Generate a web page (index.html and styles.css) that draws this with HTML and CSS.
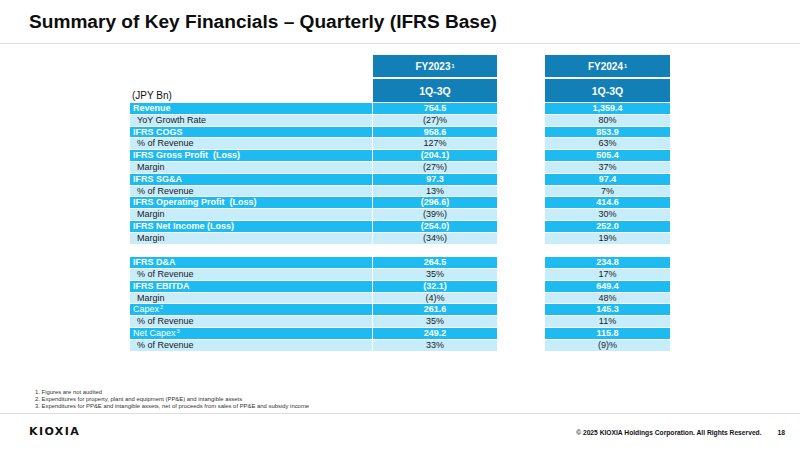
FILE: index.html
```html
<!DOCTYPE html>
<html lang="en">
<head>
<meta charset="utf-8">
<title>Summary of Key Financials</title>
<link rel="stylesheet" href="styles.css">
</head>
<body>
<div class="slide">
  <header class="top">
    <h1 class="title">Summary of Key Financials – Quarterly (IFRS Base)</h1>
  </header>
  <main class="content">
    <div class="fin">
      <div class="hrow hrow1">
        <div></div>
        <div class="hcell">FY2023<sup class="sup">1</sup></div>
        <div></div>
        <div class="hcell">FY2024<sup class="sup">1</sup></div>
      </div>
      <div class="hrow hrow2">
        <div class="unit">(JPY Bn)</div>
        <div class="hcell big">1Q-3Q</div>
        <div></div>
        <div class="hcell big">1Q-3Q</div>
      </div>
      <div class="group">
        <div class="row main"><div class="lab">Revenue</div><div class="val">754.5</div><div></div><div class="val">1,359.4</div></div>
        <div class="row sub"><div class="lab">YoY Growth Rate</div><div class="val">(27)%</div><div></div><div class="val">80%</div></div>
        <div class="row main"><div class="lab">IFRS COGS</div><div class="val">958.6</div><div></div><div class="val">853.9</div></div>
        <div class="row sub"><div class="lab">% of Revenue</div><div class="val">127%</div><div></div><div class="val">63%</div></div>
        <div class="row main"><div class="lab">IFRS Gross Profit&nbsp; (Loss)</div><div class="val">(204.1)</div><div></div><div class="val">505.4</div></div>
        <div class="row sub"><div class="lab">Margin</div><div class="val">(27%)</div><div></div><div class="val">37%</div></div>
        <div class="row main"><div class="lab">IFRS SG&amp;A</div><div class="val">97.3</div><div></div><div class="val">97.4</div></div>
        <div class="row sub"><div class="lab">% of Revenue</div><div class="val">13%</div><div></div><div class="val">7%</div></div>
        <div class="row main"><div class="lab">IFRS Operating Profit&nbsp; (Loss)</div><div class="val">(296.6)</div><div></div><div class="val">414.6</div></div>
        <div class="row sub"><div class="lab">Margin</div><div class="val">(39%)</div><div></div><div class="val">30%</div></div>
        <div class="row main"><div class="lab">IFRS Net Income (Loss)</div><div class="val">(254.0)</div><div></div><div class="val">252.0</div></div>
        <div class="row sub"><div class="lab">Margin</div><div class="val">(34%)</div><div></div><div class="val">19%</div></div>
      </div>
      <div class="group g2">
        <div class="row main"><div class="lab">IFRS D&amp;A</div><div class="val">264.5</div><div></div><div class="val">234.8</div></div>
        <div class="row sub"><div class="lab">% of Revenue</div><div class="val">35%</div><div></div><div class="val">17%</div></div>
        <div class="row main"><div class="lab">IFRS EBITDA</div><div class="val">(32.1)</div><div></div><div class="val">649.4</div></div>
        <div class="row sub"><div class="lab">Margin</div><div class="val">(4)%</div><div></div><div class="val">48%</div></div>
        <div class="row main"><div class="lab light">Capex<sup class="sup">2</sup></div><div class="val">261.6</div><div></div><div class="val">145.3</div></div>
        <div class="row sub"><div class="lab">% of Revenue</div><div class="val">35%</div><div></div><div class="val">11%</div></div>
        <div class="row main"><div class="lab light">Net Capex<sup class="sup">3</sup></div><div class="val">249.2</div><div></div><div class="val">115.8</div></div>
        <div class="row sub"><div class="lab">% of Revenue</div><div class="val">33%</div><div></div><div class="val">(9)%</div></div>
      </div>
    </div>
  </main>
  <ol class="notes">
    <li>1. Figures are not audited</li>
    <li>2. Expenditures for property, plant and equipment (PP&amp;E) and intangible assets</li>
    <li>3. Expenditures for PP&amp;E and intangible assets, net of proceeds from sales of PP&amp;E and subsidy income</li>
  </ol>
  <footer class="foot">
    <div class="logo">KIOXIA</div>
    <div class="copy">© 2025 KIOXIA Holdings Corporation. All Rights Reserved.</div>
    <div class="page">18</div>
  </footer>
</div>
</body>
</html>
```

FILE: styles.css
```css
* {
  box-sizing: border-box;
  margin: 0;
  padding: 0;
}

html,
body {
  width: 800px;
  height: 450px;
  overflow: hidden;
  background: #ffffff;
}

body {
  font-family: "Liberation Sans", Arial, sans-serif;
  color: #111111;
}

.slide {
  width: 800px;
  height: 450px;
  display: flex;
  flex-direction: column;
}

.top {
  height: 44px;
  flex: none;
  border-bottom: 1px solid #dcdcdc;
  padding: 12px 0 0 29px;
}

.title {
  font-size: 19.1px;
  line-height: 20px;
  font-weight: bold;
  color: #0d0d0d;
}

.content {
  flex: 1;
  padding: 11px 0 0 130px;
}

.hrow,
.row {
  display: grid;
  grid-template-columns: 242px 124px 46px 125px;
  column-gap: 1px;
}

.hrow1 {
  height: 22px;
}

.hrow2 {
  height: 23px;
  margin-top: 2px;
}

.hcell {
  background: #1280b6;
  color: #ffffff;
  font-weight: bold;
  font-size: 10px;
  display: flex;
  align-items: center;
  justify-content: center;
}

.hcell.big {
  font-size: 10.5px;
}

.sup {
  font-size: 5.5px;
  vertical-align: 3.5px;
  line-height: 0;
  margin-left: 1px;
}

.unit {
  display: flex;
  align-items: flex-end;
  font-size: 10px;
  line-height: 12px;
  padding-left: 2px;
  color: #111111;
}

.group {
  display: flex;
  flex-direction: column;
  gap: 1px;
  margin-top: 1px;
}

.g2 {
  margin-top: 13.7px;
}

.row {
  height: 10.8px;
  font-size: 9px;
  line-height: 10.8px;
}

.row.main .lab,
.row.main .val {
  background: #1dbbef;
  color: #ffffff;
  font-weight: bold;
}

.row.sub .lab,
.row.sub .val {
  background: #c7ecfa;
  color: #1a1a1a;
}

.row.main .lab.light {
  font-weight: normal;
}

.lab {
  padding-left: 3px;
  white-space: nowrap;
}

.row.sub .lab {
  padding-left: 7px;
}

.val {
  text-align: center;
}

.notes {
  list-style: none;
  flex: none;
  padding: 0 0 3.5px 35px;
  font-size: 5.9px;
  line-height: 6.9px;
  color: #333333;
}

.foot {
  flex: none;
  height: 37px;
  border-top: 1px solid #dcdcdc;
  display: flex;
  align-items: center;
  padding: 0 15px 0 29px;
}

.logo {
  font-family: "DejaVu Sans", sans-serif;
  font-weight: bold;
  font-size: 11px;
  letter-spacing: 1.4px;
  color: #111111;
  margin-top: -2px;
}

.copy {
  margin-left: auto;
  font-size: 6.7px;
  font-weight: bold;
  color: #111111;
}

.page {
  margin-left: 16px;
  font-size: 6.7px;
  font-weight: bold;
  color: #111111;
}
```
